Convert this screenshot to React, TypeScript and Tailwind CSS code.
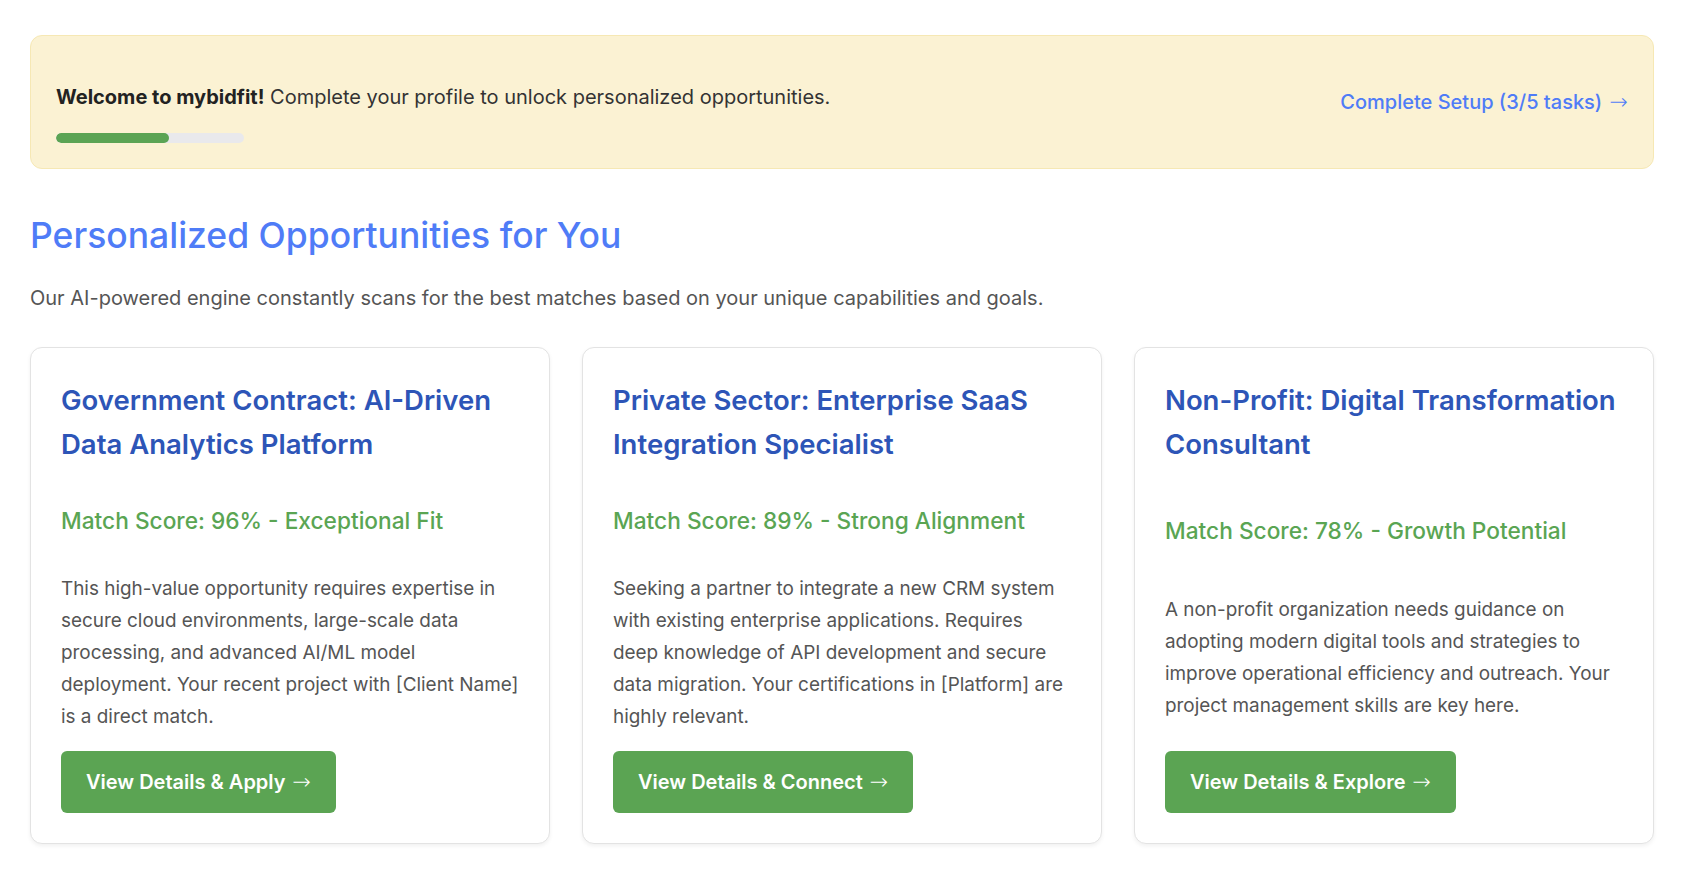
import React from "react";

const cards = [
  {
    title: "Government Contract: AI-Driven Data Analytics Platform",
    score: "Match Score: 96% - Exceptional Fit",
    desc: "This high-value opportunity requires expertise in secure cloud environments, large-scale data processing, and advanced AI/ML model deployment. Your recent project with [Client Name] is a direct match.",
    cta: "View Details & Apply",
  },
  {
    title: "Private Sector: Enterprise SaaS Integration Specialist",
    score: "Match Score: 89% - Strong Alignment",
    desc: "Seeking a partner to integrate a new CRM system with existing enterprise applications. Requires deep knowledge of API development and secure data migration. Your certifications in [Platform] are highly relevant.",
    cta: "View Details & Connect",
  },
  {
    title: "Non-Profit: Digital Transformation Consultant",
    score: "Match Score: 78% - Growth Potential",
    desc: "A non-profit organization needs guidance on adopting modern digital tools and strategies to improve operational efficiency and outreach. Your project management skills are key here.",
    cta: "View Details & Explore",
  },
];

function Arrow() {
  return (
    <span
      className="ml-[2px] text-[22px] leading-none font-extralight"
      style={{ fontFamily: "'DejaVu Sans', sans-serif" }}
    >
      →
    </span>
  );
}

export default function App() {
  return (
    <div
      className="min-h-screen bg-white pl-[30px] pr-[36px] pt-[35px] pb-[40px]"
      style={{ fontFamily: "Inter, 'Noto Sans', sans-serif" }}
    >
      {/* Banner */}
      <div className="flex items-center justify-between rounded-[12px] border border-[#f6e8b4] bg-[#fbf2d3] p-[25px]">
        <div className="flex flex-col">
          <p className="mt-[20px] mb-[20px] text-[20px] leading-[32px] text-[#333333]">
            <strong className="font-bold text-[#222222]">Welcome to mybidfit!</strong>{" "}
            Complete your profile to unlock personalized opportunities.
          </p>
          <div className="h-[10px] w-[188px] overflow-hidden rounded-full bg-[#e9e9ec]">
            <div className="h-full w-[60%] rounded-full bg-[#5ba454]" />
          </div>
        </div>
        <a className="text-[20px] font-medium leading-[32px] text-[#4f7cf7]">
          Complete Setup (3/5 tasks) <Arrow />
        </a>
      </div>

      {/* Heading */}
      <h1 className="mt-[46px] text-[35.5px] font-medium leading-[42.6px] text-[#4f7cf7]">
        Personalized Opportunities for You
      </h1>
      <p className="mt-[24px] text-[20px] leading-[32px] text-[#555555]">
        Our AI-powered engine constantly scans for the best matches based on your unique capabilities and goals.
      </p>

      {/* Cards */}
      <div className="mt-[33px] grid grid-cols-3 gap-[32px]">
        {cards.map((c) => (
          <div
            key={c.title}
            className="flex flex-col justify-between rounded-[12px] border border-[#e3e3e3] bg-white p-[30px] shadow-[0_2px_4px_rgba(0,0,0,0.06)]"
          >
            <h2 className="mb-[37px] text-[27.5px] font-semibold leading-[44px] text-[#2d55b7]">
              {c.title}
            </h2>
            <p className="mb-[34px] text-[22.7px] font-medium leading-[36px] text-[#5aa553]">
              {c.score}
            </p>
            <p className="mb-[18px] text-[18.9px] leading-[32px] text-[#555555]">{c.desc}</p>
            <div>
              <button className="rounded-[6px] bg-[#5ba453] px-[25px] py-[15px] text-[20px] font-semibold leading-[32px] text-white">
                {c.cta} <Arrow />
              </button>
            </div>
          </div>
        ))}
      </div>
    </div>
  );
}
